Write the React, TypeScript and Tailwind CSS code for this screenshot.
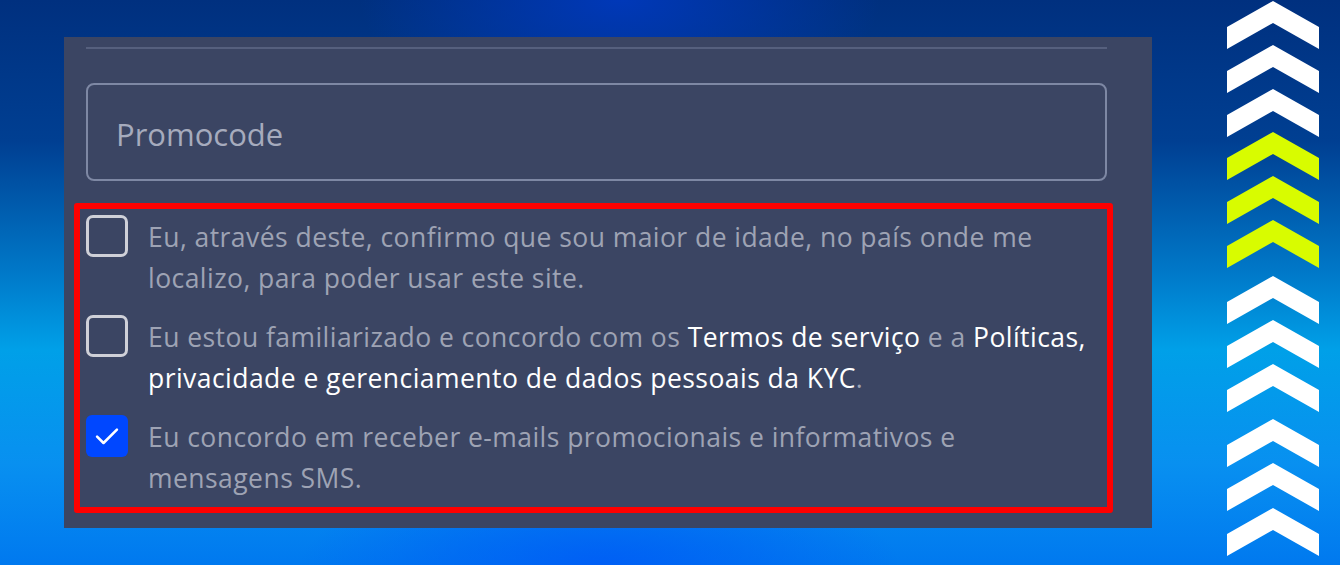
const chevrons = [
  { y: 1, c: "#ffffff" },
  { y: 45, c: "#ffffff" },
  { y: 89, c: "#ffffff" },
  { y: 132, c: "#d8fc00" },
  { y: 176, c: "#d8fc00" },
  { y: 220, c: "#d8fc00" },
  { y: 276, c: "#ffffff" },
  { y: 320, c: "#ffffff" },
  { y: 364, c: "#ffffff" },
  { y: 419, c: "#ffffff" },
  { y: 463, c: "#ffffff" },
  { y: 508, c: "#ffffff" },
];

function Chevrons() {
  return (
    <svg width="92" height="565" viewBox="0 0 92 565" className="shrink-0">
      {chevrons.map((ch) => (
        <polygon
          key={ch.y}
          fill={ch.c}
          points={`46,${ch.y} 92,${ch.y + 26} 92,${ch.y + 48} 46,${ch.y + 22} 0,${ch.y + 48} 0,${ch.y + 26}`}
        />
      ))}
    </svg>
  );
}

function Box({ checked }: { checked?: boolean }) {
  if (checked) {
    return (
      <div className="w-[42px] h-[42px] shrink-0 rounded-[6px] bg-[#0047ff] flex items-center justify-center">
        <svg width="28" height="28" viewBox="0 0 24 24" fill="none" stroke="#fff" strokeWidth="2.2" strokeLinecap="round" strokeLinejoin="round">
          <path d="M3.5 12.5l5.5 5.5L20.5 6.5" />
        </svg>
      </div>
    );
  }
  return <div className="w-[42px] h-[42px] shrink-0 rounded-[7px] border-[3px] border-[#cfd0d8]" />;
}

function Item({ checked, children }: { checked?: boolean; children: React.ReactNode }) {
  return (
    <div className="flex items-start gap-[20px]">
      <Box checked={checked} />
      <p className="flex-1 pt-[2px] text-[26.5px] tracking-[0.45px] leading-[41px] text-[#9ea3b4] whitespace-nowrap">{children}</p>
    </div>
  );
}

export default function App() {
  return (
    <div
      className="w-[1340px] h-[565px] overflow-hidden flex items-start bg-[radial-gradient(ellipse_260px_120px_at_620px_0px,#0038b8_0%,transparent_100%),radial-gradient(ellipse_300px_90px_at_600px_565px,#005ff5_0%,transparent_100%),linear-gradient(180deg,#00307f_0%,#003f92_25%,#0078c8_48%,#00a0e8_62%,#0890f0_82%,#0079ef_100%)]"
      style={{ fontFamily: '"Open Sans", "Noto Sans", sans-serif' }}
    >
      <div className="ml-[64px] mt-[37px] w-[1088px] h-[491px] bg-[#3b4563] pl-[22px] pr-[45px] pt-[10px]">
        <div className="h-[2px] bg-[#56607e]" />
        <div className="mt-[34px] h-[98px] rounded-[8px] border-2 border-[#7e88a4] flex items-center pl-[28px] pt-[4px]">
          <span className="text-[31px] text-[#a6abbd]">Promocode</span>
        </div>
        <div className="mt-[22px] -ml-[12px] -mr-[6px] border-[6px] border-[#ff0000] rounded-[3px] px-[6px] pt-[6px] pb-[8px] flex flex-col gap-[16px]">
          <Item>
            Eu, através deste, confirmo que sou maior de idade, no país onde me
            <br />
            localizo, para poder usar este site.
          </Item>
          <Item>
            Eu estou familiarizado e concordo com os{" "}
            <span className="text-white font-medium">Termos de serviço</span> e a{" "}
            <span className="text-white font-medium">Políticas,</span>
            <br />
            <span className="text-white font-medium">privacidade e gerenciamento de dados pessoais da KYC</span>.
          </Item>
          <Item checked>
            Eu concordo em receber e-mails promocionais e informativos e
            <br />
            mensagens SMS.
          </Item>
        </div>
      </div>
      <div className="ml-auto mr-[21px]">
        <Chevrons />
      </div>
    </div>
  );
}
